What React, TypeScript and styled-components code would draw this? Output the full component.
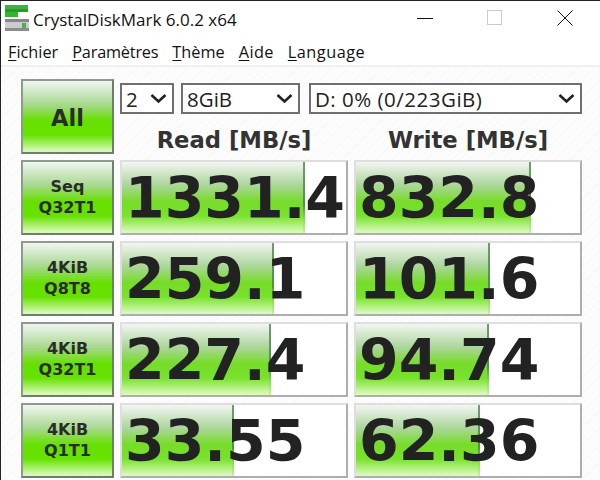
import React from "react";
import styled, { createGlobalStyle } from "styled-components";

const Global = createGlobalStyle`
  html, body { margin: 0; padding: 0; background: #fff; }
  #root { width: 600px; height: 480px; overflow: hidden; }
`;

const Window = styled.div`
  width: 600px;
  height: 480px;
  box-sizing: border-box;
  border-top: 1px solid #222;
  border-left: 1px solid #222;
  display: flex;
  flex-direction: column;
  overflow: hidden;
  background: #fff;
`;

const TitleBar = styled.div`
  height: 33px;
  flex: none;
  display: flex;
  align-items: center;
  padding-left: 3px;
`;

const AppTitle = styled.span`
  margin: 3px 0 0 3px;
  font: 400 17px "Open Sans", "Noto Sans", sans-serif;
  color: #111;
`;

const Controls = styled.div`
  margin-left: auto;
  display: flex;
  align-items: center;
`;

const ControlButton = styled.div`
  width: 70px;
  height: 33px;
  display: flex;
  align-items: center;
  justify-content: center;
`;

const MenuBar = styled.div`
  height: 33px;
  flex: none;
  box-sizing: border-box;
  display: flex;
  align-items: center;
  gap: 14px;
  padding: 5px 0 0 7px;
  border-bottom: 2px solid #f0f0f0;
`;

const MenuItem = styled.span<{ $ls?: number }>`
  font: 400 16.3px "Open Sans", "Noto Sans", sans-serif;
  letter-spacing: ${(p) => p.$ls ?? 0}px;
  color: #111;
  & u { text-underline-offset: 2px; text-decoration-thickness: 1px; }
`;

const Content = styled.div`
  flex: 1;
  padding: 12px 0 0 20px;
  background-color: #fbfbfb;
  background-image: repeating-linear-gradient(135deg, #f8f8f8 0 1px, #fcfcfc 1px 6px);
  display: grid;
  grid-template-columns: 93px 228px 228px;
  grid-template-rows: repeat(5, 75px);
  column-gap: 6px;
  row-gap: 6px;
`;

const GreenButton = styled.div<{ $large?: boolean }>`
  box-sizing: border-box;
  height: 75px;
  border: 2px solid;
  border-color: #8c9c8c #6f7c6f #6f7c6f #8c9c8c;
  background: linear-gradient(180deg, #f2f5f2 0%, #a9d992 32%, #66e000 56%, #66e200 76%, #d6f9b4 98%);
  display: flex;
  align-items: center;
  justify-content: center;
  text-align: center;
  font-family: "DejaVu Sans", sans-serif;
  font-weight: 700;
  color: #2b2b2b;
  font-size: ${(p) => (p.$large ? "22.5px" : "16px")};
  line-height: 21px;
  padding: ${(p) => (p.$large ? "4px 0 0" : "0 0 2px")};
`;

const HeadPanel = styled.div`
  grid-column: 2 / 4;
  display: flex;
  flex-direction: column;
  padding-top: 4px;
`;

const Selects = styled.div`
  display: flex;
  height: 31px;
`;

const Select = styled.div<{ $w: number; $gap: number; $ls?: number }>`
  box-sizing: border-box;
  width: ${(p) => p.$w}px;
  margin-right: ${(p) => p.$gap}px;
  height: 31px;
  border: 2px solid #6f6f6f;
  background: #fff;
  display: flex;
  align-items: center;
  justify-content: space-between;
  padding: 0 5px 0 4px;
  font: 400 20.5px "Open Sans", "Noto Sans", sans-serif;
  letter-spacing: ${(p) => p.$ls ?? 0}px;
  color: #222;
`;

const Headers = styled.div`
  display: grid;
  grid-template-columns: 228px 228px;
  column-gap: 6px;
  margin-top: 12px;
`;

const Header = styled.div`
  text-align: center;
  font: 700 22.7px "DejaVu Sans", sans-serif;
  line-height: 28px;
  color: #333;
`;

const Cell = styled.div`
  position: relative;
  box-sizing: border-box;
  height: 75px;
  border: 2px solid;
  border-color: #dedede #aeaeae #aeaeae #dedede;
  background: #fff;
  overflow: hidden;
`;

const Bar = styled.div`
  position: absolute;
  left: 0;
  top: 0;
  bottom: 0;
  background: linear-gradient(180deg, #f2f6f2 0%, #acd69c 32%, #76dc28 56%, #78e22c 76%, #d8f9b8 98%);
  &::after {
    content: "";
    position: absolute;
    right: 0;
    top: 0;
    bottom: 0;
    width: 2px;
    background: linear-gradient(180deg, #6d9e6d 0%, #4f8f4f 60%, #86dc4a 80%, #c8f2a0 100%);
  }
`;

const Value = styled.div`
  position: absolute;
  left: 3px;
  top: 0;
  height: 71px;
  display: flex;
  align-items: center;
  white-space: nowrap;
  font: 700 57px "DejaVu Sans", sans-serif;
  color: #222;
`;

const Chevron = () => (
  <svg width="17" height="11" viewBox="0 0 17 11">
    <path d="M1.5 2 L8.5 8.5 L15.5 2" fill="none" stroke="#222" strokeWidth="2.6" />
  </svg>
);

const AppIcon = () => (
  <svg width="26" height="26" viewBox="0 0 26 26">
    <rect x="1" y="0" width="23" height="4" fill="#3fb13f" />
    <rect x="1" y="4" width="23" height="3" fill="#22a022" />
    <rect x="1" y="7" width="13" height="5" fill="#35b335" />
    <rect x="1" y="14" width="24" height="3" fill="#888" />
    <rect x="1" y="17" width="24" height="9" rx="1" fill="#c9cdd2" />
    <rect x="1" y="23" width="24" height="3" fill="#8c8c8c" />
    <rect x="18" y="18" width="4" height="5" fill="#4caf4c" />
  </svg>
);

const rows = [
  { label: ["Seq", "Q32T1"], read: "1331.4", rw: 183, write: "832.8", ww: 175 },
  { label: ["4KiB", "Q8T8"], read: "259.1", rw: 152, write: "101.6", ww: 134 },
  { label: ["4KiB", "Q32T1"], read: "227.4", rw: 149, write: "94.74", ww: 133 },
  { label: ["4KiB", "Q1T1"], read: "33.55", rw: 112, write: "62.36", ww: 124 },
];

export default function App() {
  return (
    <Window>
      <Global />
      <TitleBar>
        <AppIcon />
        <AppTitle>CrystalDiskMark 6.0.2 x64</AppTitle>
        <Controls>
          <ControlButton>
            <svg width="16" height="16" viewBox="0 0 16 16"><path d="M0 8.5H16" stroke="#111" /></svg>
          </ControlButton>
          <ControlButton>
            <svg width="16" height="16" viewBox="0 0 16 16"><rect x="0.5" y="0.5" width="14" height="14" fill="none" stroke="#ccc" /></svg>
          </ControlButton>
          <ControlButton>
            <svg width="16" height="16" viewBox="0 0 16 16"><path d="M0.5 0.5L15.5 15.5M15.5 0.5L0.5 15.5" stroke="#111" /></svg>
          </ControlButton>
        </Controls>
      </TitleBar>
      <MenuBar>
        <MenuItem><u>F</u>ichier</MenuItem>
        <MenuItem $ls={-0.2}><u>P</u>aramètres</MenuItem>
        <MenuItem><u>T</u>hème</MenuItem>
        <MenuItem $ls={0.4}><u>A</u>ide</MenuItem>
        <MenuItem $ls={0.5}><u>L</u>anguage</MenuItem>
      </MenuBar>
      <Content>
        <GreenButton $large>All</GreenButton>
        <HeadPanel>
          <Selects>
            <Select $w={54} $gap={7}>2<Chevron /></Select>
            <Select $w={119} $gap={9}>8GiB<Chevron /></Select>
            <Select $w={273} $gap={0} $ls={0.5}>D: 0% (0/223GiB)<Chevron /></Select>
          </Selects>
          <Headers>
            <Header>Read [MB/s]</Header>
            <Header>Write [MB/s]</Header>
          </Headers>
        </HeadPanel>
        {rows.map((r) => (
          <React.Fragment key={r.read}>
            <GreenButton>{r.label[0]}<br />{r.label[1]}</GreenButton>
            <Cell><Bar style={{ width: r.rw }} /><Value>{r.read}</Value></Cell>
            <Cell><Bar style={{ width: r.ww }} /><Value>{r.write}</Value></Cell>
          </React.Fragment>
        ))}
      </Content>
    </Window>
  );
}
